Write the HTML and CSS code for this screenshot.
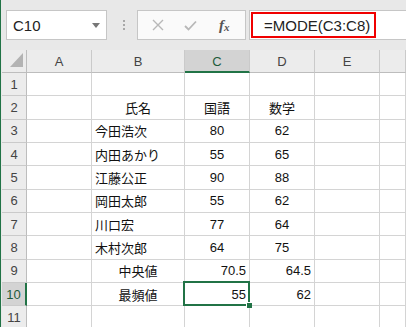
FILE: index.html
```html
<!DOCTYPE html>
<html lang="ja">
<head>
  <meta charset="UTF-8">
  <meta name="viewport" content="width=device-width, initial-scale=1.0">
  <title>MODE</title>
  <link rel="stylesheet" href="styles.css">
</head>
<body>
  <div class="app">
    <div class="toolbar">
      <div class="name-box">
        <span class="name">C10</span>
        <span class="caret"></span>
      </div>
      <div class="grip"><i></i><i></i><i></i></div>
      <div class="fx-buttons">
        <svg class="btn-icon" width="12" height="12" viewBox="0 0 12 12">
          <path d="M1 1 L11 11 M11 1 L1 11" stroke="#b8b8b8" stroke-width="1.4" fill="none"/>
        </svg>
        <svg class="btn-icon" width="13" height="11" viewBox="0 0 13 11">
          <path d="M1 6 L4.5 9.5 L12 1.5" stroke="#b8b8b8" stroke-width="1.8" fill="none"/>
        </svg>
        <span class="fx">f<sub>x</sub></span>
      </div>
      <div class="formula-bar">
        <div class="formula">=MODE(C3:C8)</div>
      </div>
    </div>

    <div class="sheet">
      <div class="corner"><span class="corner-tri"></span></div>
      <div class="col-head">A</div>
      <div class="col-head">B</div>
      <div class="col-head active">C</div>
      <div class="col-head">D</div>
      <div class="col-head">E</div>
      <div class="col-head"></div>

      <div class="row-head">1</div>
      <div class="cell"></div><div class="cell"></div><div class="cell"></div><div class="cell"></div><div class="cell"></div><div class="cell"></div>

      <div class="row-head">2</div>
      <div class="cell"></div><div class="cell c">氏名</div><div class="cell c">国語</div><div class="cell c">数学</div><div class="cell"></div><div class="cell"></div>

      <div class="row-head">3</div>
      <div class="cell"></div><div class="cell l">今田浩次</div><div class="cell c">80</div><div class="cell c">62</div><div class="cell"></div><div class="cell"></div>

      <div class="row-head">4</div>
      <div class="cell"></div><div class="cell l">内田あかり</div><div class="cell c">55</div><div class="cell c">65</div><div class="cell"></div><div class="cell"></div>

      <div class="row-head">5</div>
      <div class="cell"></div><div class="cell l">江藤公正</div><div class="cell c">90</div><div class="cell c">88</div><div class="cell"></div><div class="cell"></div>

      <div class="row-head">6</div>
      <div class="cell"></div><div class="cell l">岡田太郎</div><div class="cell c">55</div><div class="cell c">62</div><div class="cell"></div><div class="cell"></div>

      <div class="row-head">7</div>
      <div class="cell"></div><div class="cell l">川口宏</div><div class="cell c">77</div><div class="cell c">64</div><div class="cell"></div><div class="cell"></div>

      <div class="row-head">8</div>
      <div class="cell"></div><div class="cell l">木村次郎</div><div class="cell c">64</div><div class="cell c">75</div><div class="cell"></div><div class="cell"></div>

      <div class="row-head">9</div>
      <div class="cell"></div><div class="cell c">中央値</div><div class="cell r">70.5</div><div class="cell r">64.5</div><div class="cell"></div><div class="cell"></div>

      <div class="row-head active">10</div>
      <div class="cell"></div><div class="cell c">最頻値</div>
      <div class="cell r selected">55<span class="sel-frame"></span><span class="fill-handle"></span></div>
      <div class="cell r">62</div><div class="cell"></div><div class="cell"></div>

      <div class="row-head">11</div>
      <div class="cell"></div><div class="cell"></div><div class="cell"></div><div class="cell"></div><div class="cell"></div><div class="cell"></div>

      <div class="row-head"></div>
      <div class="cell"></div><div class="cell"></div><div class="cell"></div><div class="cell"></div><div class="cell"></div><div class="cell"></div>
    </div>
  </div>
</body>
</html>
```

FILE: styles.css
```css
body {
  margin: 0;
  font-family: "Liberation Sans", "Noto Sans CJK JP", sans-serif;
  background-color: #ffffff;
  overflow: hidden;
}
.app {
  width: 405px;
  height: 327px;
  border-left: 1px solid #217346;
  overflow: hidden;
  background-color: #e8e8e8;
}
.toolbar {
  height: 50px;
  box-sizing: border-box;
  padding-top: 10px;
  display: flex;
  align-items: flex-start;
}
.name-box {
  margin-left: 5px;
  width: 101px;
  height: 30px;
  box-sizing: border-box;
  border: 1px solid #c6c6c6;
  background-color: #ffffff;
  display: flex;
  align-items: center;
  justify-content: space-between;
  padding: 0 6px 0 6px;
}
.name {
  font-size: 15px;
  color: #222;
}
.caret {
  width: 0;
  height: 0;
  border-left: 4px solid transparent;
  border-right: 4px solid transparent;
  border-top: 5px solid #777;
}
.grip {
  margin-left: 16px;
  width: 3px;
  height: 30px;
  display: flex;
  flex-direction: column;
  justify-content: center;
  gap: 2px;
}
.grip i {
  display: block;
  width: 2px;
  height: 2px;
  background-color: #a8a8a8;
}
.fx-buttons {
  margin-left: 11px;
  width: 109px;
  height: 30px;
  box-sizing: border-box;
  border: 1px solid #c6c6c6;
  background-color: #fafafa;
  display: flex;
  align-items: center;
  padding-left: 14px;
}
.btn-icon {
  margin-right: 20px;
}
.btn-icon + .btn-icon {
  margin-right: 22px;
}
.fx {
  font-family: "Liberation Serif", serif;
  font-style: italic;
  font-weight: bold;
  font-size: 15px;
  color: #555;
}
.fx sub {
  font-size: 11px;
  vertical-align: -1px;
}
.formula-bar {
  margin-left: 3px;
  flex: 1;
  height: 30px;
  box-sizing: border-box;
  border: 1px solid #c6c6c6;
  border-right: none;
  background-color: #ffffff;
}
.formula {
  margin: 1px 0 0 1px;
  width: 125px;
  height: 26px;
  box-sizing: border-box;
  border: 2px solid #f00000;
  font-size: 15px;
  color: #222;
  display: flex;
  align-items: center;
  padding-left: 11px;
}
.sheet {
  margin-left: 1px;
  display: grid;
  grid-template-columns: 25px 65px 93px 65px 65px 65px 1fr;
  grid-template-rows: 23px repeat(12, 23.333px);
  background-color: #ffffff;
}
.corner,
.col-head,
.row-head {
  background-color: #ececec;
  box-sizing: border-box;
  font-size: 13px;
  color: #444;
  display: flex;
  align-items: center;
  justify-content: center;
}
.corner {
  border-right: 1px solid #bdbdbd;
  border-bottom: 1px solid #bdbdbd;
  position: relative;
}
.corner-tri {
  position: absolute;
  right: 3px;
  bottom: 5px;
  width: 0;
  height: 0;
  border-left: 13px solid transparent;
  border-bottom: 14px solid #b3b3b3;
}
.col-head {
  border-right: 1px solid #cacaca;
  border-bottom: 1px solid #bdbdbd;
  padding-top: 1px;
}
.col-head.active {
  background-color: #d3d3d3;
  border-bottom: 2px solid #217346;
  color: #1e5b3a;
}
.row-head {
  border-right: 1px solid #bdbdbd;
  border-bottom: 1px solid #cacaca;
}
.row-head.active {
  background-color: #d3d3d3;
  border-right: 2px solid #217346;
  color: #1e5b3a;
}
.cell {
  box-sizing: border-box;
  border-right: 1px solid #d4d4d4;
  border-bottom: 1px solid #d4d4d4;
  font-size: 13px;
  color: #111;
  display: flex;
  align-items: center;
  white-space: nowrap;
}
.cell.c {
  justify-content: center;
}
.cell.l {
  padding-left: 3px;
}
.cell.r {
  justify-content: flex-end;
  padding-right: 3px;
}
.selected {
  position: relative;
}
.sel-frame {
  position: absolute;
  left: -2px;
  top: -2px;
  right: -1px;
  bottom: -1px;
  border: 2px solid #217346;
}
.fill-handle {
  position: absolute;
  right: -3px;
  bottom: -3px;
  width: 5px;
  height: 5px;
  background-color: #217346;
  border-left: 1px solid #fff;
  border-top: 1px solid #fff;
}
```
